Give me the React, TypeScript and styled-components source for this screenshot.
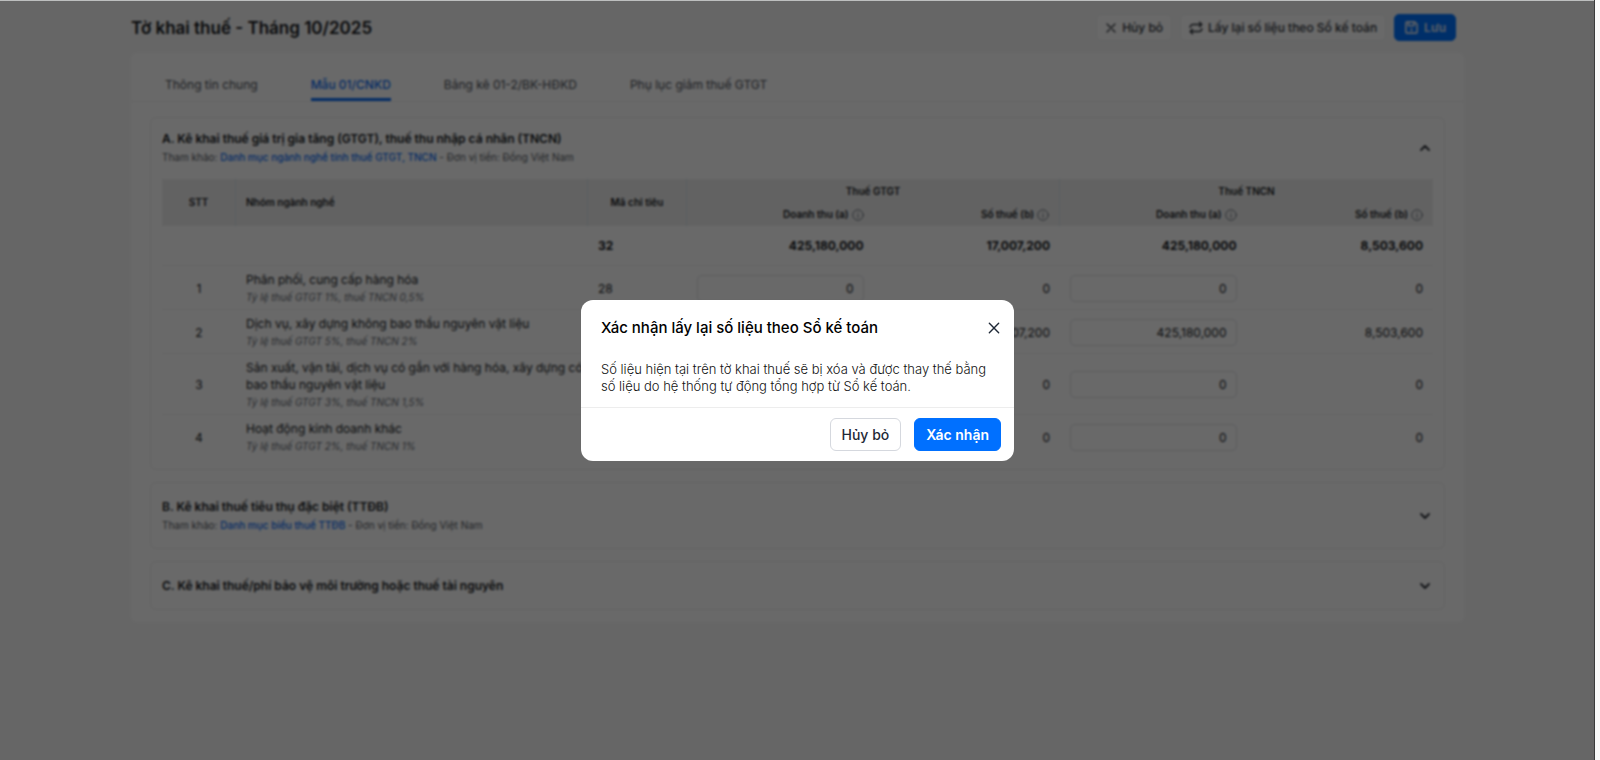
import React from 'react';
import styled, { createGlobalStyle, css } from 'styled-components';

const GlobalStyle = createGlobalStyle`
  *, *::before, *::after { box-sizing: border-box; }
  html, body, #root { height: 100%; }
  body {
    margin: 0;
    background: #fafafa;
    color: #16191d;
    font-family: Inter, "Noto Sans", sans-serif;
    font-size: 12px;
    line-height: 17px;
  }
  button, input { font: inherit; color: inherit; }
  h1, h2, p { margin: 0; }
`;

const Frame = styled.div`
  position: relative;
  min-height: 100%;
  margin-right: 5px;
  border-right: 1px solid #3c3c3c;
  background: #f8f8f8;
`;

const Page = styled.div`
  padding: 14px 130px 0 131px;
`;

const TopBar = styled.header`
  display: flex;
  align-items: center;
  justify-content: space-between;
  padding-right: 8px;
  height: 27px;
`;

const PageTitle = styled.h1`
  font-size: 17px;
  line-height: 24px;
  font-weight: 600;
`;

const Actions = styled.div`
  display: flex;
  align-items: center;
  gap: 8px;
`;

const ToolButton = styled.button<{ $primary?: boolean }>`
  display: inline-flex;
  align-items: center;
  gap: 5px;
  height: 27px;
  padding: 0 8px;
  border: 1px solid #eef0f2;
  border-radius: 5px;
  background: #fff;
  color: #2f343b;
  font-weight: 500;
  ${(p) =>
    p.$primary &&
    css`
      padding: 0 9px;
      background: #0073ff;
      border-color: #0073ff;
      color: #e4ecf6;
      font-weight: 600;
    `}
`;

const Card = styled.main`
  margin-top: 12px;
  padding-bottom: 12px;
  border-radius: 6px;
  background: #fff;
`;

const Tabs = styled.nav`
  display: flex;
  gap: 53px;
  height: 49px;
  padding: 16px 34px 0;
  border-bottom: 1px solid #f3f3f3;
`;

const Tab = styled.a<{ $active?: boolean }>`
  height: 32px;
  padding-top: 7px;
  border-bottom: 3px solid ${(p) => (p.$active ? '#0a6cf5' : 'transparent')};
  color: ${(p) => (p.$active ? '#0a6cf5' : '#4b5058')};
  font-weight: ${(p) => (p.$active ? 500 : 400)};
  text-decoration: none;
`;

const Sections = styled.div`
  display: flex;
  flex-direction: column;
  gap: 12px;
  padding: 15px 19px 0;
`;

const Section = styled.section`
  padding: 0 11px;
  border: 1px solid #f1f1f1;
  border-radius: 6px;
`;

const headHeights = { open: 59, closed: 65, single: 47 };

const SectionHead = styled.div<{ $kind: keyof typeof headHeights }>`
  display: flex;
  align-items: center;
  justify-content: space-between;
  height: ${(p) => headHeights[p.$kind]}px;
`;

const SectionTitle = styled.h2`
  font-size: 12px;
  line-height: 18px;
  font-weight: 600;
`;

const Note = styled.p`
  color: #565b63;
  font-size: 10px;
  line-height: 18px;
`;

const RefLink = styled.a`
  color: #0a6cf5;
  font-weight: 500;
  text-decoration: none;
`;

const Toggle = styled.button`
  display: flex;
  padding: 4px 2px;
  border: 0;
  background: none;
  color: #2b2f36;
`;

const TaxTable = styled.table`
  width: 100%;
  margin: 2px 0 10px;
  border-collapse: separate;
  border-spacing: 0;
  table-layout: fixed;
`;

const Col = styled.col<{ $w?: number }>`
  ${(p) => p.$w && `width: ${p.$w}px;`}
`;

const Th = styled.th<{ $align?: string; $line?: boolean }>`
  height: 23px;
  padding: 0 10px;
  background: #efefef;
  border-right: ${(p) => (p.$line ? '1px solid #d8e2ea' : '0')};
  font-size: 10px;
  line-height: 17px;
  font-weight: 600;
  text-align: ${(p) => p.$align ?? 'center'};
  tr:first-child > & { height: 24px; }
`;

const HeadLabel = styled.span`
  display: inline-flex;
  align-items: center;
  gap: 3px;
  svg { color: #565f6b; }
`;

const Td = styled.td<{ $align?: string; $bold?: boolean }>`
  height: 40px;
  padding: 4px 10px;
  border-bottom: 1px solid #f3f3f3;
  text-align: ${(p) => p.$align ?? 'right'};
  font-weight: ${(p) => (p.$bold ? 700 : 400)};
`;

const NameTd = styled(Td)`
  padding-right: 4px;
`;

const BodyRow = styled.tr`
  ${Td} { padding-top: 5px; }
  ${NameTd} { padding-bottom: 3px; }
  &:last-child ${Td} { border-bottom-color: transparent; }
`;

const Rate = styled.div`
  margin-top: 1px;
  color: #666b73;
  font-size: 10px;
  font-style: italic;
`;

const Amount = styled.input`
  display: block;
  width: 100%;
  height: 27px;
  padding: 0 9px;
  border: 1px solid #dfe1e4;
  border-radius: 5px;
  background: #fff;
  text-align: right;
`;

const Backdrop = styled.div`
  position: absolute;
  inset: 0;
  display: flex;
  align-items: flex-start;
  justify-content: center;
  padding: 299px 0 0 1px;
  border-top: 1px solid #bdbfbf;
  background: rgba(0, 0, 0, 0.59);
  backdrop-filter: blur(1px);
`;

const Dialog = styled.div`
  width: 433px;
  border-radius: 12px;
  background: #fff;
`;

const DialogHead = styled.div`
  display: flex;
  align-items: center;
  justify-content: space-between;
  padding: 17px 13px 15px 20px;
`;

const DialogTitle = styled.h2`
  color: #000;
  font-size: 15px;
  line-height: 22px;
  font-weight: 500;
`;

const CloseButton = styled.button`
  display: flex;
  padding: 0;
  border: 0;
  background: none;
  color: #1f2937;
`;

const DialogText = styled.p`
  padding: 7px 16px 12px 20px;
  color: #111;
  font-size: 13px;
  font-weight: 300;
`;

const DialogFoot = styled.div`
  display: flex;
  justify-content: flex-end;
  gap: 13px;
  padding: 10px 13px;
  border-top: 1px solid #ededed;
`;

const DialogButton = styled.button<{ $primary?: boolean }>`
  height: 33px;
  padding: 0 11px;
  border: 1px solid ${(p) => (p.$primary ? '#0070ff' : '#d5d8de')};
  border-radius: 6px;
  background: ${(p) => (p.$primary ? '#0070ff' : '#fff')};
  color: ${(p) => (p.$primary ? '#fff' : '#1f2937')};
  font-size: 14px;
  font-weight: ${(p) => (p.$primary ? 600 : 500)};
`;

const Icon = ({ size, width = 2, children }: { size: number; width?: number; children: React.ReactNode }) => (
  <svg width={size} height={size} viewBox="0 0 24 24" fill="none" stroke="currentColor" strokeWidth={width} strokeLinecap="round" strokeLinejoin="round" aria-hidden="true">
    {children}
  </svg>
);

const CrossIcon = ({ size }: { size: number }) => (
  <Icon size={size} width={2.4}><path d="M4 4l16 16M20 4L4 20" /></Icon>
);

const RepeatIcon = () => (
  <Icon size={14} width={2.4}>
    <path d="M18 2l4 4-4 4M22 6H7a5 5 0 0 0-5 5M6 22l-4-4 4-4M2 18h15a5 5 0 0 0 5-5" />
  </Icon>
);

const SaveIcon = () => (
  <Icon size={15} width={2.6}>
    <path d="M5 3h12l4 4v12a2 2 0 0 1-2 2H5a2 2 0 0 1-2-2V5a2 2 0 0 1 2-2z" />
    <path d="M7 4v5h9V4M12 14v3" />
  </Icon>
);

const InfoIcon = () => (
  <Icon size={12} width={1.6}>
    <circle cx="12" cy="12" r="10.5" />
    <path d="M12 11v6M12 7v.5" />
  </Icon>
);

const Chevron = ({ up }: { up?: boolean }) => (
  <Icon size={12} width={3.6}><path d={up ? 'M4 16l8-8 8 8' : 'M4 8l8 8 8-8'} /></Icon>
);

type Row = { no: number; name: string; rate: string; code: string; vat: string; vatTax: string; pit: string; pitTax: string };

const rows: Row[] = [
  { no: 1, name: 'Phân phối, cung cấp hàng hóa', rate: 'Tỷ lệ thuế GTGT 1%, thuế TNCN 0,5%', code: '28', vat: '0', vatTax: '0', pit: '0', pitTax: '0' },
  { no: 2, name: 'Dịch vụ, xây dựng không bao thầu nguyên vật liệu', rate: 'Tỷ lệ thuế GTGT 5%, thuế TNCN 2%', code: '29', vat: '425,180,000', vatTax: '17,007,200', pit: '425,180,000', pitTax: '8,503,600' },
  { no: 3, name: 'Sản xuất, vận tải, dịch vụ có gắn với hàng hóa, xây dựng có bao thầu nguyên vật liệu', rate: 'Tỷ lệ thuế GTGT 3%, thuế TNCN 1,5%', code: '30', vat: '0', vatTax: '0', pit: '0', pitTax: '0' },
  { no: 4, name: 'Hoạt động kinh doanh khác', rate: 'Tỷ lệ thuế GTGT 2%, thuế TNCN 1%', code: '31', vat: '0', vatTax: '0', pit: '0', pitTax: '0' },
];

const tabs = ['Thông tin chung', 'Mẫu 01/CNKD', 'Bảng kê 01-2/BK-HĐKD', 'Phụ lục giảm thuế GTGT'];

const DeclarationTable = () => (
  <TaxTable>
    <colgroup>
      <Col $w={74} /><Col $w={352} /><Col $w={99} /><Col /><Col /><Col /><Col />
    </colgroup>
    <thead>
      <tr>
        <Th rowSpan={2} $line>STT</Th>
        <Th rowSpan={2} $align="left" $line>Nhóm ngành nghề</Th>
        <Th rowSpan={2} $line>Mã chỉ tiêu</Th>
        <Th colSpan={2} $line>Thuế GTGT</Th>
        <Th colSpan={2}>Thuế TNCN</Th>
      </tr>
      <tr>
        {[0, 1].map((group) => (
          <React.Fragment key={group}>
            <Th $align="right"><HeadLabel>Doanh thu (a) <InfoIcon /></HeadLabel></Th>
            <Th $align="right" $line={group === 0}><HeadLabel>Số thuế (b) <InfoIcon /></HeadLabel></Th>
          </React.Fragment>
        ))}
      </tr>
    </thead>
    <tbody>
      <tr>
        <Td /><Td />
        <Td $align="left" $bold>32</Td>
        <Td $bold>425,180,000</Td>
        <Td $bold>17,007,200</Td>
        <Td $bold>425,180,000</Td>
        <Td $bold>8,503,600</Td>
      </tr>
      {rows.map((r) => (
        <BodyRow key={r.no}>
          <Td $align="center">{r.no}</Td>
          <NameTd $align="left">{r.name}<Rate>{r.rate}</Rate></NameTd>
          <Td $align="left">{r.code}</Td>
          <Td><Amount aria-label={`Doanh thu GTGT ${r.no}`} defaultValue={r.vat} /></Td>
          <Td>{r.vatTax}</Td>
          <Td><Amount aria-label={`Doanh thu TNCN ${r.no}`} defaultValue={r.pit} /></Td>
          <Td>{r.pitTax}</Td>
        </BodyRow>
      ))}
    </tbody>
  </TaxTable>
);

export default function App() {
  return (
    <>
      <GlobalStyle />
      <Frame>
        <Page>
          <TopBar>
            <PageTitle>Tờ khai thuế - Tháng 10/2025</PageTitle>
            <Actions>
              <ToolButton><CrossIcon size={12} />Hủy bỏ</ToolButton>
              <ToolButton><RepeatIcon />Lấy lại số liệu theo Sổ kế toán</ToolButton>
              <ToolButton $primary><SaveIcon />Lưu</ToolButton>
            </Actions>
          </TopBar>
          <Card>
            <Tabs>
              {tabs.map((t, i) => <Tab key={t} href="#" $active={i === 1}>{t}</Tab>)}
            </Tabs>
            <Sections>
              <Section>
                <SectionHead $kind="open">
                  <div>
                    <SectionTitle>A. Kê khai thuế giá trị gia tăng (GTGT), thuế thu nhập cá nhân (TNCN)</SectionTitle>
                    <Note>Tham khảo: <RefLink href="#">Danh mục ngành nghề tính thuế GTGT, TNCN</RefLink> - Đơn vị tiền: Đồng Việt Nam</Note>
                  </div>
                  <Toggle aria-label="Thu gọn"><Chevron up /></Toggle>
                </SectionHead>
                <DeclarationTable />
              </Section>
              <Section>
                <SectionHead $kind="closed">
                  <div>
                    <SectionTitle>B. Kê khai thuế tiêu thụ đặc biệt (TTĐB)</SectionTitle>
                    <Note>Tham khảo: <RefLink href="#">Danh mục biểu thuế TTĐB</RefLink> - Đơn vị tiền: Đồng Việt Nam</Note>
                  </div>
                  <Toggle aria-label="Mở rộng"><Chevron /></Toggle>
                </SectionHead>
              </Section>
              <Section>
                <SectionHead $kind="single">
                  <SectionTitle>C. Kê khai thuế/phí bảo vệ môi trường hoặc thuế tài nguyên</SectionTitle>
                  <Toggle aria-label="Mở rộng"><Chevron /></Toggle>
                </SectionHead>
              </Section>
            </Sections>
          </Card>
        </Page>
        <Backdrop>
          <Dialog role="dialog" aria-modal="true" aria-labelledby="dialog-title">
            <DialogHead>
              <DialogTitle id="dialog-title">Xác nhận lấy lại số liệu theo Sổ kế toán</DialogTitle>
              <CloseButton aria-label="Đóng"><CrossIcon size={14} /></CloseButton>
            </DialogHead>
            <DialogText>
              Số liệu hiện tại trên tờ khai thuế sẽ bị xóa và được thay thế bằng số liệu do hệ thống tự động tổng hợp từ Sổ kế toán.
            </DialogText>
            <DialogFoot>
              <DialogButton>Hủy bỏ</DialogButton>
              <DialogButton $primary>Xác nhận</DialogButton>
            </DialogFoot>
          </Dialog>
        </Backdrop>
      </Frame>
    </>
  );
}
